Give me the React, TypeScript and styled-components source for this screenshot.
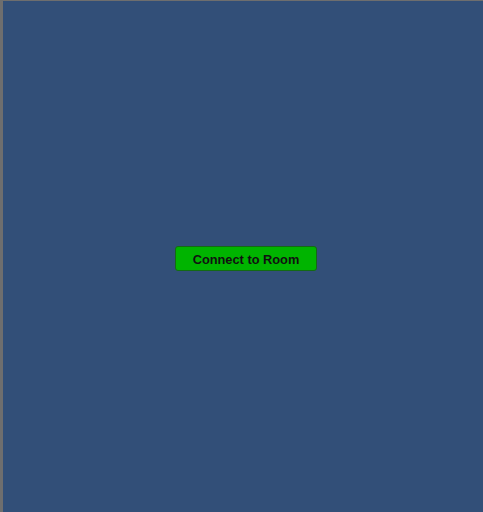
import React from "react";
import styled, { createGlobalStyle } from "styled-components";

const Global = createGlobalStyle`
  html, body { margin: 0; padding: 0; width: 100%; height: 100%; overflow: hidden; }
  #root { width: 100%; height: 100%; }
`;

const Frame = styled.div`
  box-sizing: border-box;
  width: 483px;
  height: 512px;
  border-left: 3px solid #6e6e6e;
  border-top: 1px solid #6e6e6e;
  background: #324f78;
  display: flex;
  align-items: center;
  justify-content: center;
  padding: 3px 0 0 6px;
`;

const Button = styled.button`
  box-sizing: border-box;
  width: 142px;
  height: 25px;
  background: #00b400;
  border: 1px solid #146a14;
  border-radius: 3px;
  color: #111;
  font-family: "Liberation Sans", Arial, sans-serif;
  font-weight: bold;
  font-size: 12.8px;
  padding: 2px 0 0 0;
  cursor: pointer;
`;

export default function App() {
  return (
    <>
      <Global />
      <Frame>
        <Button>Connect to Room</Button>
      </Frame>
    </>
  );
}
